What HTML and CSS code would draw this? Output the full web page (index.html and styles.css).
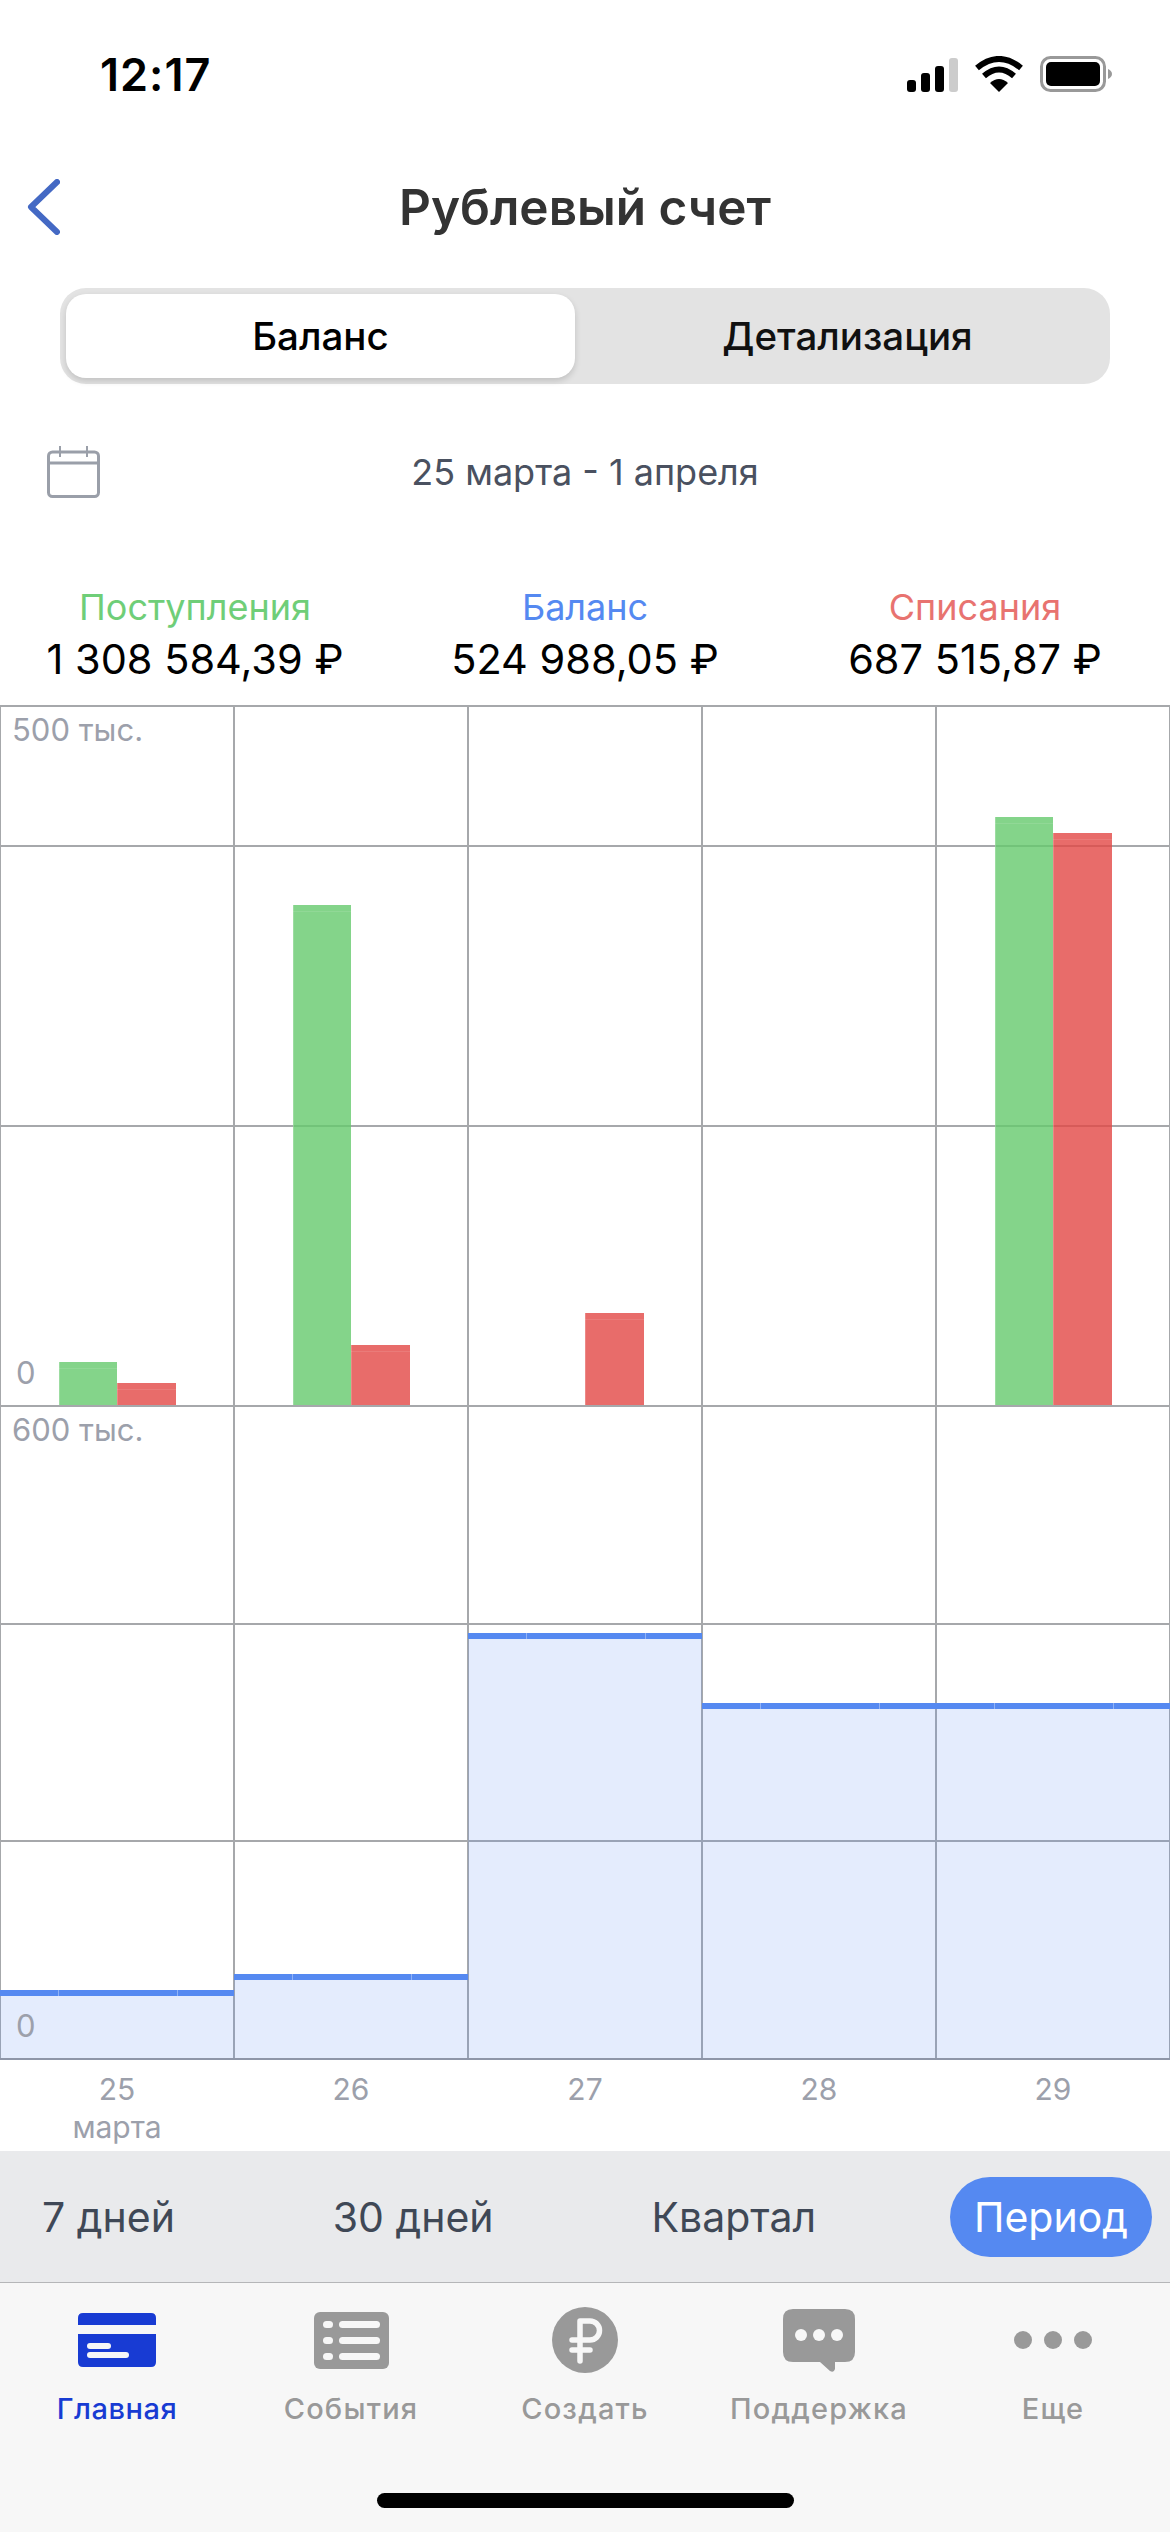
FILE: index.html
```html
<!DOCTYPE html>
<html lang="ru">
  <head>
    <meta charset="UTF-8" />
    <meta name="viewport" content="width=device-width, initial-scale=1.0" />
    <title>Рублевый счет</title>
    <link rel="stylesheet" href="styles.css">
  </head>
  <body>
    <main>
      <div class="statusbar">
        <span class="statusbar__time">12:17</span>
        <div class="statusbar__icons">
          <svg width="51" height="34" viewBox="0 0 51 34">
            <rect x="0" y="22" width="9" height="12" rx="3" fill="#000" />
            <rect x="14" y="15" width="9" height="19" rx="3" fill="#000" />
            <rect x="28" y="8" width="9" height="26" rx="3" fill="#000" />
            <rect x="42" y="0" width="9" height="34" rx="3" fill="#ccc" />
          </svg>
          <svg width="48" height="36" viewBox="0 0 48 36">
            <path d="M24 36 L15 27 Q24 19 33 27 Z" fill="#000" />
            <path d="M9 20 Q24 7 39 20" fill="none" stroke="#000" stroke-width="6" />
            <path d="M2 12 Q24 -6 46 12" fill="none" stroke="#000" stroke-width="6" />
          </svg>
          <svg width="72" height="36" viewBox="0 0 72 36">
            <rect x="1.5" y="1.5" width="63" height="33" rx="9" fill="none" stroke="#999" stroke-width="3" />
            <rect x="6" y="6" width="54" height="24" rx="5" fill="#000" />
            <path d="M68 13 Q72 15 72 18 Q72 21 68 23 Z" fill="#999" />
          </svg>
        </div>
      </div>

      <header class="header">
        <svg class="header__back" width="33" height="56" viewBox="0 0 33 56">
          <path d="M30 3 L4 28 L30 53" fill="none" stroke="#4469c4" stroke-width="6" stroke-linecap="round" stroke-linejoin="round" />
        </svg>
        <h1 class="header__title">Рублевый счет</h1>
      </header>

      <div class="segment">
        <div class="segment__item segment__item_active">Баланс</div>
        <div class="segment__item">Детализация</div>
      </div>

      <div class="dates">
        <svg class="dates__icon" width="53" height="52" viewBox="0 0 53 52">
          <rect x="1.5" y="6" width="50" height="44.5" rx="4" fill="none" stroke="#9a9fa9" stroke-width="3" />
          <path d="M1.5 17 H51.5" stroke="#9a9fa9" stroke-width="3" />
          <path d="M13 0 V11 M40 0 V11" stroke="#9a9fa9" stroke-width="2" />
        </svg>
        <span>25 марта - 1 апреля</span>
      </div>

      <div class="stats">
        <div class="stat">
          <div class="stat__label stat__label_green">Поступления</div>
          <div class="stat__value">1 308 584,39 ₽</div>
        </div>
        <div class="stat">
          <div class="stat__label stat__label_blue">Баланс</div>
          <div class="stat__value">524 988,05 ₽</div>
        </div>
        <div class="stat">
          <div class="stat__label stat__label_red">Списания</div>
          <div class="stat__value">687 515,87 ₽</div>
        </div>
      </div>

      <div class="chart chart_bars">
        <div class="chart__rows">
          <div class="chart__row"></div>
          <div class="chart__row"></div>
          <div class="chart__row"></div>
        </div>
        <div class="chart__cols">
          <div class="chart__col">
            <div class="bar bar_green" style="height: 43px"></div>
            <div class="bar bar_red" style="height: 22px"></div>
          </div>
          <div class="chart__col">
            <div class="bar bar_green" style="height: 500px"></div>
            <div class="bar bar_red" style="height: 60px"></div>
          </div>
          <div class="chart__col">
            <div class="bar bar_green" style="height: 0"></div>
            <div class="bar bar_red" style="height: 92px"></div>
          </div>
          <div class="chart__col"></div>
          <div class="chart__col">
            <div class="bar bar_green" style="height: 588px"></div>
            <div class="bar bar_red" style="height: 572px"></div>
          </div>
        </div>
        <span class="chart__label chart__label_top">500 тыс.</span>
        <span class="chart__label chart__label_zero">0</span>
      </div>

      <div class="chart chart_balance">
        <div class="chart__rows">
          <div class="chart__row"></div>
          <div class="chart__row"></div>
          <div class="chart__row"></div>
        </div>
        <div class="chart__cols">
          <div class="chart__col"><div class="fill" style="height: 68px"></div></div>
          <div class="chart__col"><div class="fill" style="height: 84px"></div></div>
          <div class="chart__col"><div class="fill" style="height: 425px"></div></div>
          <div class="chart__col"><div class="fill" style="height: 355px"></div></div>
          <div class="chart__col"><div class="fill" style="height: 355px"></div></div>
        </div>
        <span class="chart__label chart__label_top">600 тыс.</span>
        <span class="chart__label chart__label_zero">0</span>
      </div>

      <div class="axis">
        <div class="axis__item">25<br />марта</div>
        <div class="axis__item">26</div>
        <div class="axis__item">27</div>
        <div class="axis__item">28</div>
        <div class="axis__item">29</div>
      </div>

      <div class="periods">
        <div class="period">7 дней</div>
        <div class="period">30 дней</div>
        <div class="period">Квартал</div>
        <div class="period period_active">Период</div>
      </div>

      <nav class="tabs">
        <div class="tab tab_active">
          <div class="tab__icon">
            <svg width="78" height="54" viewBox="0 0 78 54">
              <path d="M0 12 V5 Q0 0 5 0 H73 Q78 0 78 5 V12 Z" fill="#183bd3" />
              <path d="M0 21 H78 V49 Q78 54 73 54 H5 Q0 54 0 49 Z" fill="#183bd3" />
              <rect x="9" y="30" width="24" height="6" rx="3" fill="#f7f7f7" />
              <rect x="9" y="39" width="42" height="6" rx="3" fill="#f7f7f7" />
            </svg>
          </div>
          <div class="tab__label">Главная</div>
        </div>
        <div class="tab">
          <div class="tab__icon">
            <svg width="75" height="57" viewBox="0 0 75 57">
              <rect width="75" height="57" rx="6" fill="#999" />
              <g fill="#f7f7f7">
                <rect x="9" y="9" width="10" height="7" rx="3.5" />
                <rect x="25" y="9" width="41" height="7" rx="3.5" />
                <rect x="9" y="25" width="10" height="7" rx="3.5" />
                <rect x="25" y="25" width="41" height="7" rx="3.5" />
                <rect x="9" y="41" width="10" height="7" rx="3.5" />
                <rect x="25" y="41" width="41" height="7" rx="3.5" />
              </g>
            </svg>
          </div>
          <div class="tab__label">События</div>
        </div>
        <div class="tab">
          <div class="tab__icon">
            <svg width="66" height="66" viewBox="0 0 66 66">
              <circle cx="33" cy="33" r="33" fill="#999" />
              <path d="M28 54 V14 H38 A9.5 9.5 0 0 1 38 33 H20 M20 43 H38" fill="none" stroke="#f7f7f7" stroke-width="5.5" stroke-linecap="round" stroke-linejoin="round" />
            </svg>
          </div>
          <div class="tab__label">Создать</div>
        </div>
        <div class="tab">
          <div class="tab__icon">
            <svg width="72" height="63" viewBox="0 0 72 63">
              <path d="M10 0 H62 Q72 0 72 10 V43 Q72 53 62 53 H52 L52 60 Q51 64 47 62 L37 53 H10 Q0 53 0 43 V10 Q0 0 10 0 Z" fill="#999" />
              <circle cx="18" cy="26" r="6" fill="#f7f7f7" />
              <circle cx="36" cy="26" r="6" fill="#f7f7f7" />
              <circle cx="54" cy="26" r="6" fill="#f7f7f7" />
            </svg>
          </div>
          <div class="tab__label">Поддержка</div>
        </div>
        <div class="tab">
          <div class="tab__icon">
            <svg width="78" height="18" viewBox="0 0 78 18">
              <circle cx="9" cy="9" r="9" fill="#999" />
              <circle cx="39" cy="9" r="9" fill="#999" />
              <circle cx="69" cy="9" r="9" fill="#999" />
            </svg>
          </div>
          <div class="tab__label">Еще</div>
        </div>
        <div class="tabs__home"></div>
      </nav>
    </main>
  </body>
</html>
```

FILE: styles.css
```css
:root {
  --line-color: #a6a8ab;
  --label-color: #9ca0ab;
  --text-color: #3f4856;
  --blue-color: #5589f1;
  --tab-color: #999;
}

* {
  box-sizing: border-box;
  margin: 0;
  padding: 0;
}
body {
  font-family: Inter, "Noto Sans", sans-serif;
  background-color: #fff;
}
main {
  width: 1170px;
  height: 2532px;
  overflow: hidden;
  display: flex;
  flex-direction: column;
}

.statusbar {
  height: 146px;
  padding: 2px 58px 0 100px;
  display: flex;
  align-items: center;
  justify-content: space-between;
}
.statusbar__time {
  font-size: 45px;
  font-weight: 600;
  letter-spacing: 1px;
  color: #000;
}
.statusbar__icons {
  display: flex;
  align-items: flex-end;
  gap: 17px;
}

.header {
  height: 122px;
  position: relative;
  display: flex;
  align-items: center;
  justify-content: center;
}
.header__back {
  position: absolute;
  left: 27px;
  top: 33px;
}
.header__title {
  font-size: 49.5px;
  font-weight: 600;
  color: #333;
}

.segment {
  margin: 20px 60px 0;
  height: 96px;
  padding: 6px 0 6px 6px;
  display: flex;
  background-color: #e3e3e3;
  border-radius: 26px;
}
.segment__item {
  flex: 1;
  padding-left: 10px;
  display: flex;
  align-items: center;
  justify-content: center;
  font-size: 38.5px;
  font-weight: 500;
  color: #111;
}
.segment__item_active {
  flex: none;
  width: 509px;
  padding-left: 0;
  background-color: #fff;
  border-radius: 20px;
  box-shadow: 0 3px 6px rgba(0, 0, 0, 0.15);
  color: #000;
}

.dates {
  height: 176px;
  position: relative;
  display: flex;
  align-items: center;
  justify-content: center;
  font-size: 36px;
  color: #4a5160;
}
.dates__icon {
  position: absolute;
  left: 47px;
  top: 62px;
}

.stats {
  height: 145px;
  display: grid;
  grid-template-columns: repeat(3, 1fr);
  align-content: start;
  padding-top: 24px;
}
.stat {
  text-align: center;
}
.stat__label {
  font-size: 36px;
  line-height: 46px;
}
.stat__label_green {
  color: #6fce78;
}
.stat__label_blue {
  color: var(--blue-color);
}
.stat__label_red {
  color: #e87370;
}
.stat__value {
  font-size: 41.5px;
  line-height: 52px;
  margin-top: 3px;
  color: #000;
}

.chart {
  position: relative;
  width: 1170px;
}
.chart_bars {
  height: 700px;
}
.chart_balance {
  height: 655px;
  border-bottom: 2px solid #8e96a8;
}
.chart__rows,
.chart__cols {
  position: absolute;
  inset: 0;
  display: grid;
}
.chart__rows {
  grid-template-rows: 140px 280px 280px;
}
.chart_balance .chart__rows {
  grid-template-rows: 218px 217px 218px;
}
.chart__row {
  border-top: 2px solid var(--line-color);
}
.chart__cols {
  grid-template-columns: repeat(5, 234px);
}
.chart__col {
  border-left: 1px solid var(--line-color);
  border-right: 1px solid var(--line-color);
  display: flex;
  align-items: flex-end;
  justify-content: center;
}
.chart__label {
  position: absolute;
  left: 12px;
  font-size: 31px;
  line-height: 36px;
  color: var(--label-color);
}
.chart__label_top {
  top: 7px;
}
.chart__label_zero {
  left: 16px;
  bottom: 14px;
}

.bar {
  width: 58.5px;
  box-shadow: inset 1px 0 0 rgba(255, 255, 255, 0.2);
  background-image: linear-gradient(
    transparent 6px,
    rgba(255, 255, 255, 0.1) 6px,
    rgba(255, 255, 255, 0.1) 7px,
    transparent 7px
  );
}
.bar_green {
  background-color: rgba(101, 201, 109, 0.8);
}
.bar_red {
  background-color: rgba(226, 71, 69, 0.8);
}
.fill {
  width: calc(100% + 2px);
  flex: none;
  position: relative;
  border-top: 6px solid var(--blue-color);
  background-color: rgba(85, 137, 241, 0.16);
}
/* tick marks left by the bars in the stroke */
.fill::before {
  content: "";
  position: absolute;
  top: -6px;
  left: 58px;
  width: 118px;
  height: 6px;
  border-left: 1px solid rgba(255, 255, 255, 0.35);
  border-right: 1px solid rgba(255, 255, 255, 0.35);
}

.axis {
  height: 91px;
  display: grid;
  grid-template-columns: repeat(5, 234px);
  padding-top: 10px;
}
.axis__item {
  font-size: 30px;
  line-height: 38px;
  text-align: center;
  color: var(--label-color);
}

.periods {
  height: 132px;
  padding: 26px 18px 0;
  display: flex;
  align-items: flex-start;
  justify-content: space-between;
  background-color: #e9eaec;
  border-bottom: 1px solid #b5b6b8;
}
.period {
  height: 80px;
  padding: 0 24px;
  display: flex;
  align-items: center;
  font-size: 41px;
  color: var(--text-color);
}
.period_active {
  background-color: var(--blue-color);
  border-radius: 40px;
  color: #fff;
}

.tabs {
  flex: 1;
  position: relative;
  display: grid;
  grid-template-columns: repeat(5, 234px);
  align-content: start;
  background-color: #f7f7f7;
}
.tab {
  display: flex;
  flex-direction: column;
  align-items: center;
}
.tab__icon {
  height: 90px;
  margin-top: 12px;
  display: flex;
  align-items: center;
  justify-content: center;
}
.tab__label {
  margin-top: 5px;
  font-size: 29px;
  line-height: 38px;
  font-weight: 500;
  letter-spacing: 1.2px;
  color: var(--tab-color);
}
.tab_active .tab__label {
  letter-spacing: 0.5px;
  color: #183bd3;
}
.tabs__home {
  position: absolute;
  left: 377px;
  bottom: 24px;
  width: 417px;
  height: 15px;
  border-radius: 8px;
  background-color: #000;
}
```
